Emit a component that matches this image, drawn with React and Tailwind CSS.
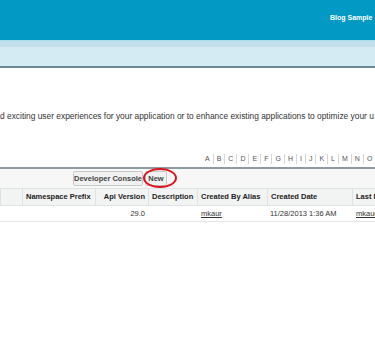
const letters = ['A', 'B', 'C', 'D', 'E', 'F', 'G', 'H', 'I', 'J', 'K', 'L', 'M', 'N', 'O'];

const columns = [
  { label: '', align: 'left' },
  { label: 'Namespace Prefix', align: 'left' },
  { label: 'Api Version', align: 'right' },
  { label: 'Description', align: 'left' },
  { label: 'Created By Alias', align: 'left' },
  { label: 'Created Date', align: 'left' },
  { label: 'Last M', align: 'left' },
];

const App = () => {
  return (
    <div className="relative w-[375px] h-[340px] overflow-hidden bg-white font-['Liberation_Sans',Arial,sans-serif]">
      {/* Top header */}
      <div className="h-[40px] bg-[#0399c5] pl-[330px] pt-[14px] whitespace-nowrap overflow-hidden">
        <div className="text-[7px] leading-[8px] font-bold text-white">Blog Sample</div>
      </div>
      <div className="h-[1px] bg-[#a9dfee]" />
      <div className="h-[6px] bg-[#c2e0eb]" />
      <div className="h-[19px] bg-[#d4ebf4]" />
      <div className="h-[2px] bg-[#6d8892]" />

      {/* Intro text */}
      <div className="mt-[43px] h-[10px] text-[8.4px] leading-[10px] text-[#333] whitespace-nowrap overflow-hidden">
        d exciting user experiences for your application or to enhance existing applications to optimize your u
      </div>

      {/* Alphabet filter */}
      <div className="mt-[33px] flex pl-[202px] text-[7px] leading-[10px] text-[#555] whitespace-nowrap">
        {letters.map((l) => (
          <span key={l} className="px-[3px] border-r border-[#d6d6d6]">{l}</span>
        ))}
      </div>

      {/* List block */}
      <div className="mt-[3px] border-t-2 border-[#8d9aa1]">
        <div className="h-[19px] bg-[#f7f7f7] flex items-center gap-[2px] pl-[73px]">
          <button className="h-[15px] w-[70px] bg-[#f1f1f1] border border-[#c7c7c7] rounded-[2px] text-[7.5px] font-bold text-[#444]">
            Developer Console
          </button>
          <button className="h-[15px] w-[22px] bg-[#f1f1f1] border border-[#c7c7c7] rounded-[2px] text-[7.5px] font-bold text-[#444]">
            New
          </button>
        </div>

        <div className="grid grid-cols-[22px_73px_53px_49px_70px_85px_1fr] h-[18px] bg-[#f2f3f3] border-t border-b border-[#e0e3e5] text-[7.5px] font-bold text-[#222] whitespace-nowrap">
          {columns.map((c, i) => (
            <div
              key={i}
              className={`flex items-center overflow-hidden border-l border-[#dfe1e3] ${c.align === 'right' ? 'justify-end pr-[3px]' : 'pl-[3px]'}`}
            >
              {c.label}
            </div>
          ))}
        </div>

        <div className="grid grid-cols-[22px_73px_53px_49px_70px_85px_1fr] h-[16px] border-b border-[#e3e6e8] text-[7.5px] text-[#333] whitespace-nowrap">
          <div />
          <div />
          <div className="flex items-center justify-end pr-[3px]">29.0</div>
          <div />
          <div className="flex items-center pl-[4px] underline">mkaur</div>
          <div className="flex items-center pl-[3px]">11/28/2013 1:36 AM</div>
          <div className="flex items-center pl-[4px] underline overflow-hidden">mkaur</div>
        </div>
      </div>

      {/* Highlight circle over New button */}
      <div className="absolute left-[143px] top-[168px] w-[34px] h-[20px] rounded-[50%] border-2 border-[#d9141c]" />
    </div>
  );
};

export default App;
